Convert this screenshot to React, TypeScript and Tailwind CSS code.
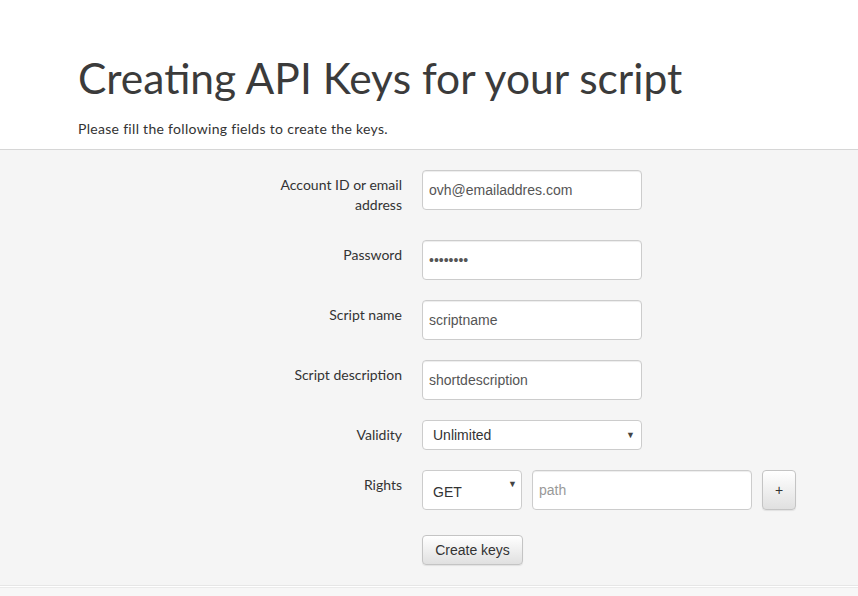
import React from "react"

const label = "text-right text-[14px] leading-[20px] text-[#333] pt-[5px]"
const input =
  "h-[40px] w-[220px] rounded-[4px] border border-[#ccc] bg-white px-[6px] text-[14px] text-[#555] shadow-[inset_0_1px_1px_rgba(0,0,0,0.075)] outline-none"
const btn =
  "rounded-[4px] border border-[#c4c4c4] bg-gradient-to-b from-white to-[#e0e0e0] text-[14px] text-[#333] shadow-[0_1px_1px_rgba(0,0,0,0.08)]"

function Arrow() {
  return (
    <span className="pointer-events-none absolute right-[7px] top-1/2 -translate-y-1/2 text-[9px] leading-none text-[#444]">
      ▼
    </span>
  )
}

export default function App() {
  const arial = { fontFamily: '"Liberation Sans", Arial, sans-serif' }
  return (
    <div className="min-h-[596px] w-full bg-white" style={{ fontFamily: 'Lato, "Open Sans", sans-serif' }}>
      <header className="h-[150px] border-b border-[#d6d6d6] pl-[78px] pt-[54px]">
        <h1 className="text-[42.5px] leading-[48px] text-[#3b3b3b]">Creating API Keys for your script</h1>
        <p className="mt-[18px] text-[14px] leading-[18px] tracking-[0.3px] text-[#333]">
          Please fill the following fields to create the keys.
        </p>
      </header>

      <main className="bg-[#f5f5f5] pt-[20px]">
        <form className="ml-[262px] grid grid-cols-[140px_auto] gap-x-[20px]" style={arial}>
          <label className={label + " mb-[25px]"} style={{ fontFamily: "Lato, sans-serif" }}>
            Account ID or email
            <br />
            address
          </label>
          <div className="mb-[30px]">
            <input className={input} style={arial} defaultValue="ovh@emailaddres.com" />
          </div>

          <label className={label + " mb-[20px]"} style={{ fontFamily: "Lato, sans-serif" }}>
            Password
          </label>
          <div className="mb-[20px]">
            <input type="password" className={input} style={arial} defaultValue="password" />
          </div>

          <label className={label + " mb-[20px]"} style={{ fontFamily: "Lato, sans-serif" }}>
            Script name
          </label>
          <div className="mb-[20px]">
            <input className={input} style={arial} defaultValue="scriptname" />
          </div>

          <label className={label + " mb-[20px]"} style={{ fontFamily: "Lato, sans-serif" }}>
            Script description
          </label>
          <div className="mb-[20px]">
            <input className={input} style={arial} defaultValue="shortdescription" />
          </div>

          <label className={label + " mb-[20px]"} style={{ fontFamily: "Lato, sans-serif" }}>
            Validity
          </label>
          <div className="relative mb-[20px] w-[220px]">
            <select
              className="h-[30px] w-[220px] appearance-none rounded-[4px] border border-[#ccc] bg-white px-[10px] text-[14px] text-[#333] outline-none"
              style={arial}
              defaultValue="Unlimited"
            >
              <option>Unlimited</option>
              <option>1 day</option>
              <option>30 days</option>
            </select>
            <Arrow />
          </div>

          <label className={label + " mb-[25px]"} style={{ fontFamily: "Lato, sans-serif" }}>
            Rights
          </label>
          <div className="mb-[25px] flex items-start gap-[10px]">
            <div className="relative w-[100px]">
              <select
                className="h-[40px] w-[100px] appearance-none rounded-[4px] border border-[#ccc] bg-white pl-[10px] pt-[4px] text-[14px] text-[#333] outline-none"
                style={arial}
                defaultValue="GET"
              >
                <option>GET</option>
                <option>POST</option>
                <option>PUT</option>
                <option>DELETE</option>
              </select>
              <span className="pointer-events-none absolute right-[5px] top-[10px] text-[9px] leading-none text-[#444]">▼</span>
            </div>
            <input className={input + " placeholder:text-[#999]"} style={arial} placeholder="path" />
            <button type="button" className={btn + " h-[40px] w-[34px]"} style={arial}>
              +
            </button>
          </div>

          <div />
          <div className="pb-[20px]">
            <button type="button" className={btn + " h-[30px] w-[101px]"} style={arial}>
              Create keys
            </button>
          </div>
        </form>
        <div className="border-t border-[#e6e6e6]" />
        <div className="h-px bg-white" />
        <div className="h-[10px] border-t border-[#ebebeb] bg-[#f7f7f7]" />
      </main>
    </div>
  )
}
